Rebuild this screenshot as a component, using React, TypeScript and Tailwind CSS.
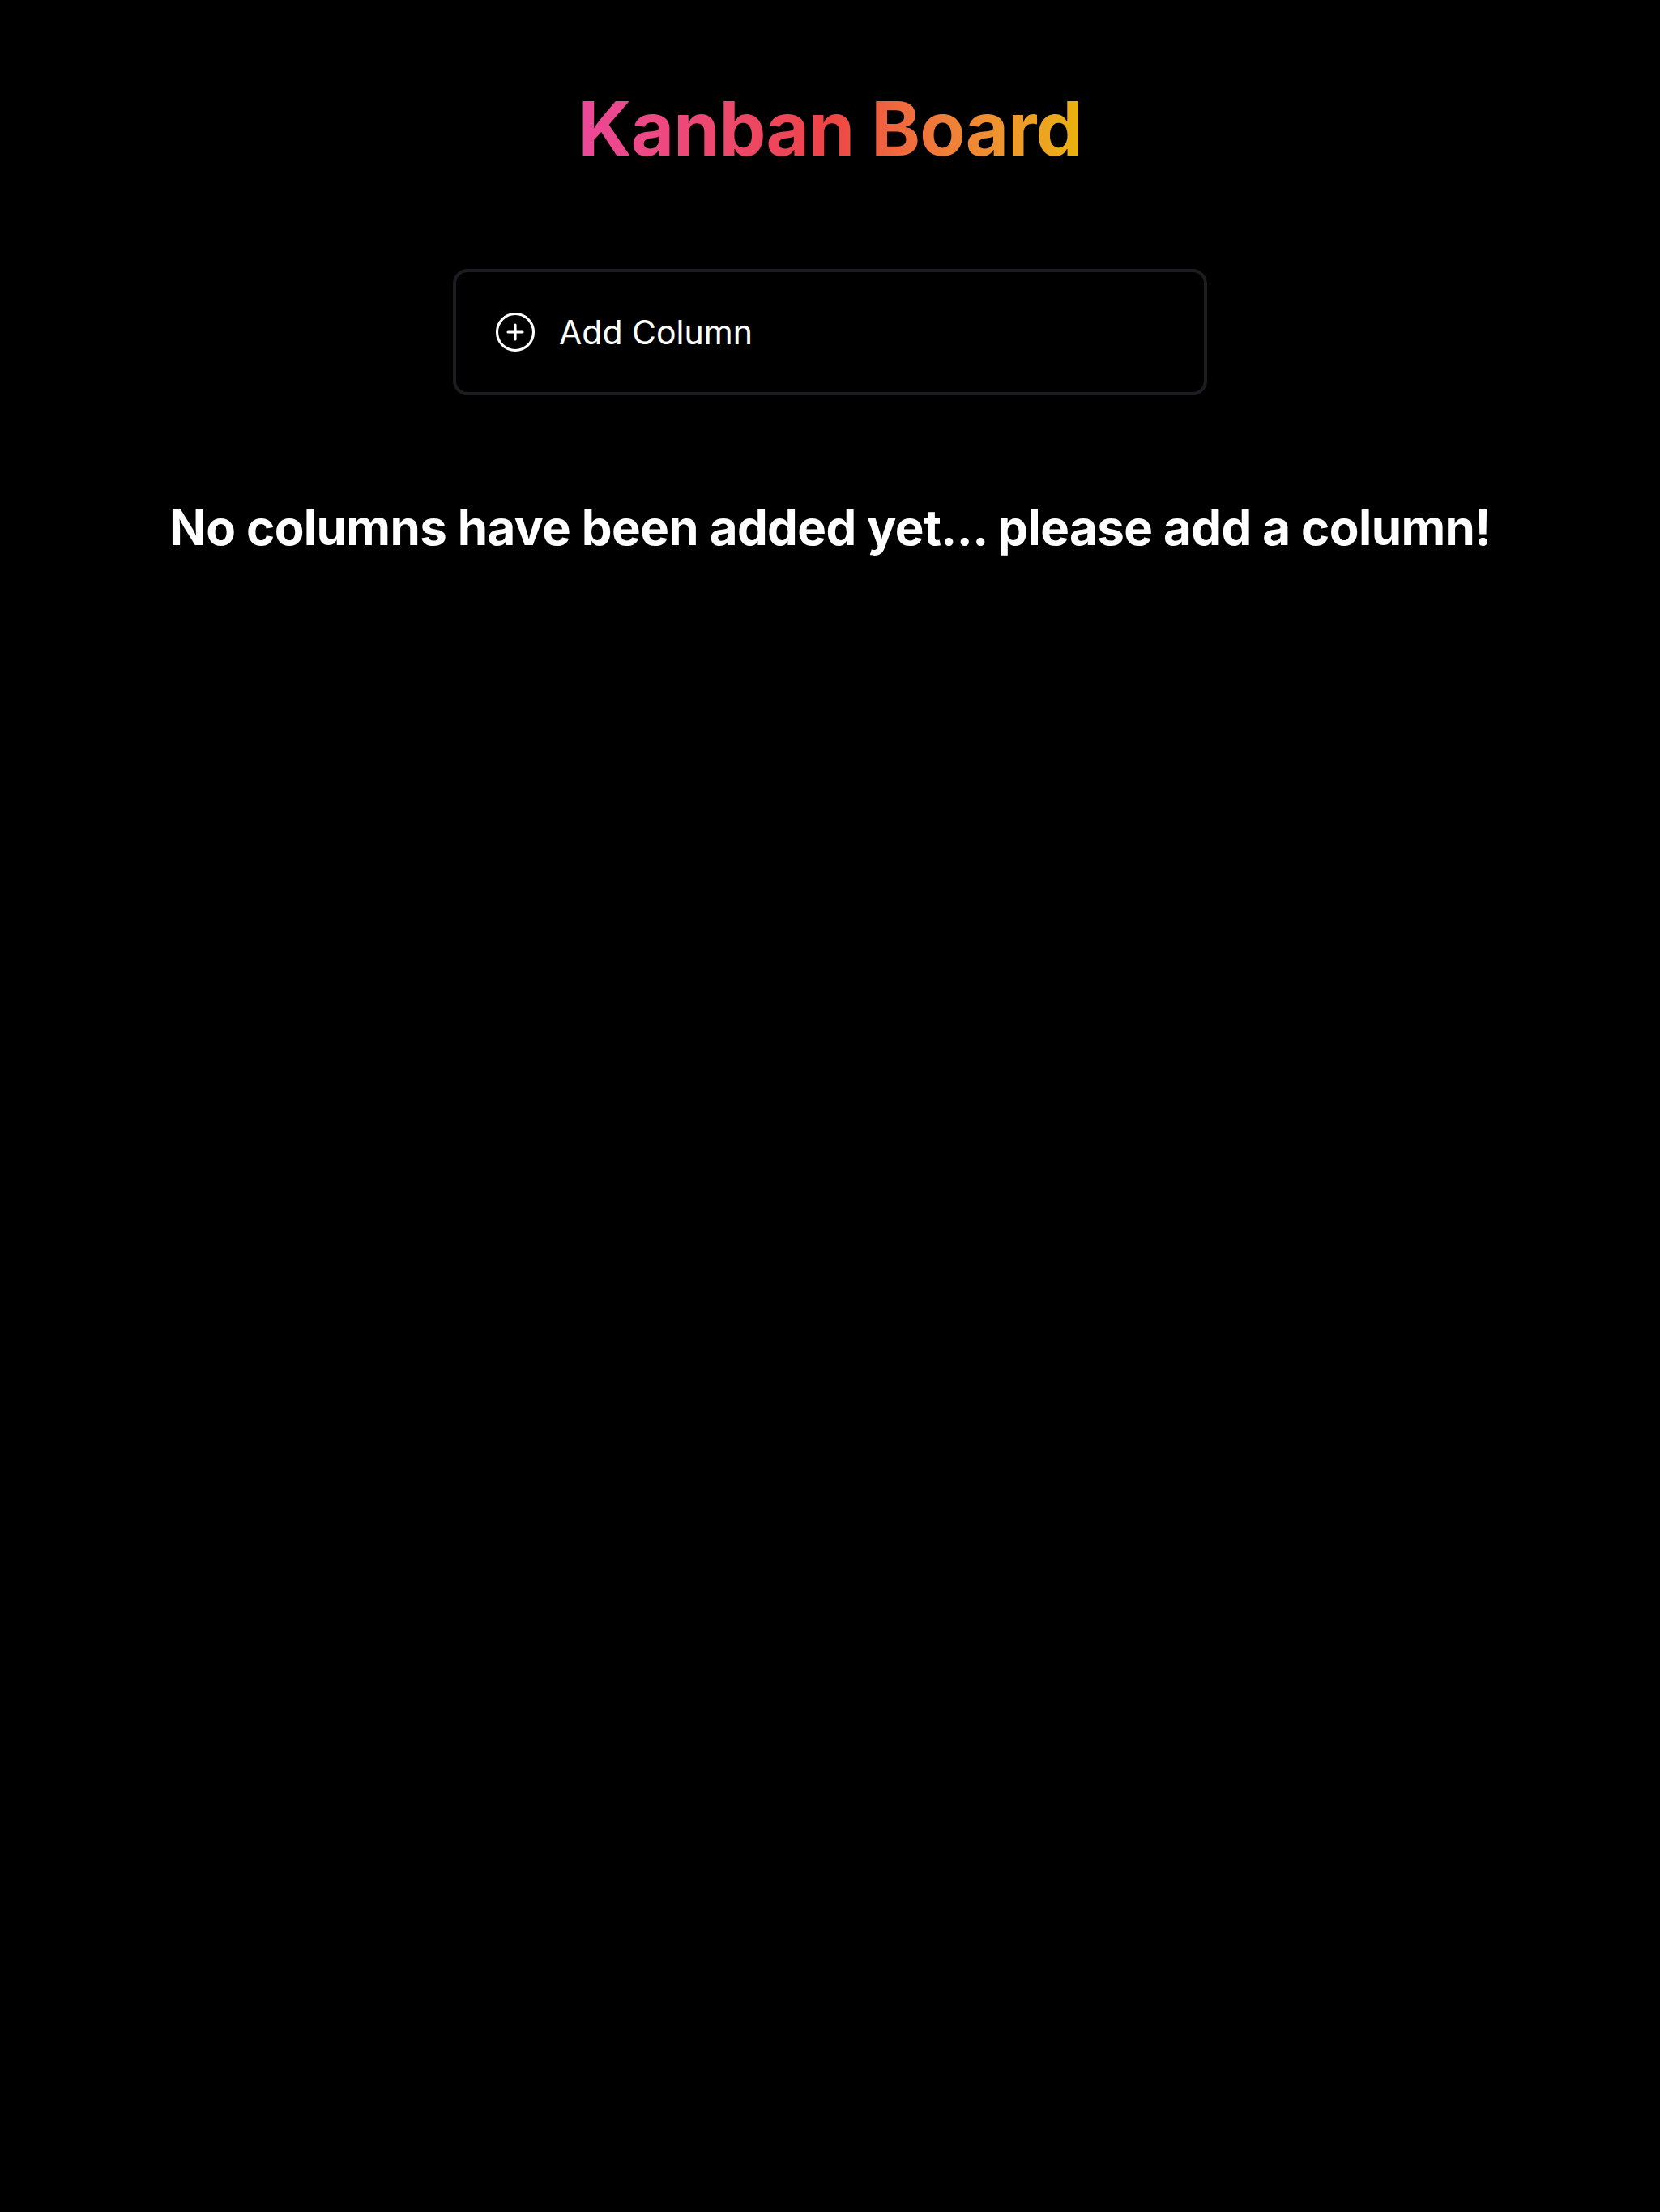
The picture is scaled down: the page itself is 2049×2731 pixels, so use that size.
import { CirclePlus } from "lucide-react";

export default function App() {
  return (
    <div
      className="min-h-[2731px] w-full bg-black text-white flex flex-col items-center"
      style={{ fontFamily: "Inter, 'Noto Sans', sans-serif" }}
    >
      <h1 className="mt-[113px] text-[92px] leading-none font-bold tracking-[-0.01em] bg-gradient-to-r from-[#ec4899] via-[#ef4444] to-[#eab308] bg-clip-text text-transparent">
        Kanban Board
      </h1>

      <button className="mt-[127px] w-[931px] h-[156px] flex items-center gap-[27px] pl-[46px] rounded-[18px] border-4 border-[#1c1d21] bg-black text-white cursor-pointer">
        <CirclePlus size={54} strokeWidth={1.4} />
        <span className="text-[41px] leading-none font-normal">Add Column</span>
      </button>

      <h2 className="mt-[133px] text-[60px] leading-none font-bold tracking-[-0.01em] text-white">
        No columns have been added yet... please add a column!
      </h2>
    </div>
  );
}
